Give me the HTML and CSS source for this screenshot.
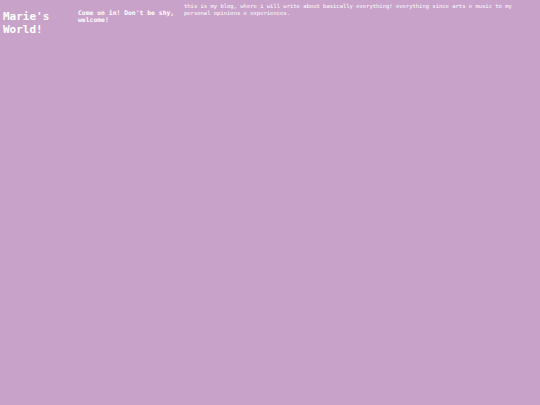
FILE: index.html
```html
<!DOCTYPE html>
<html>
<head>
<meta charset="utf-8">
<link rel="stylesheet" href="styles.css">
</head>
<body>
<header class="top">
  <h1 class="title">Marie's World!</h1>
  <p class="welcome">Come on in! Don't be shy, welcome!</p>
  <p class="intro">this is my blog, where i will write about basically everything! everything since arts e music to my personal opinions e experiences.</p>
</header>
</body>
</html>
```
FILE: styles.css
```css
html, body {
  margin: 0;
  padding: 0;
  background: #c8a2c8;
  height: 100%;
}
body {
  font-family: "DejaVu Sans Mono", monospace;
  color: #ffffff;
}
.top {
  display: flex;
  align-items: flex-start;
  padding: 0 0 0 3px;
}
.title {
  margin: 10px 0 0 0;
  width: 75px;
  font-size: 11px;
  line-height: 13px;
  font-weight: bold;
}
.welcome {
  margin: 9.5px 0 0 0;
  width: 106px;
  font-size: 6.4px;
  line-height: 7.6px;
  font-weight: bold;
}
.intro {
  margin: 3px 0 0 0;
  width: 340px;
  font-size: 5.5px;
  line-height: 7px;
}
```
